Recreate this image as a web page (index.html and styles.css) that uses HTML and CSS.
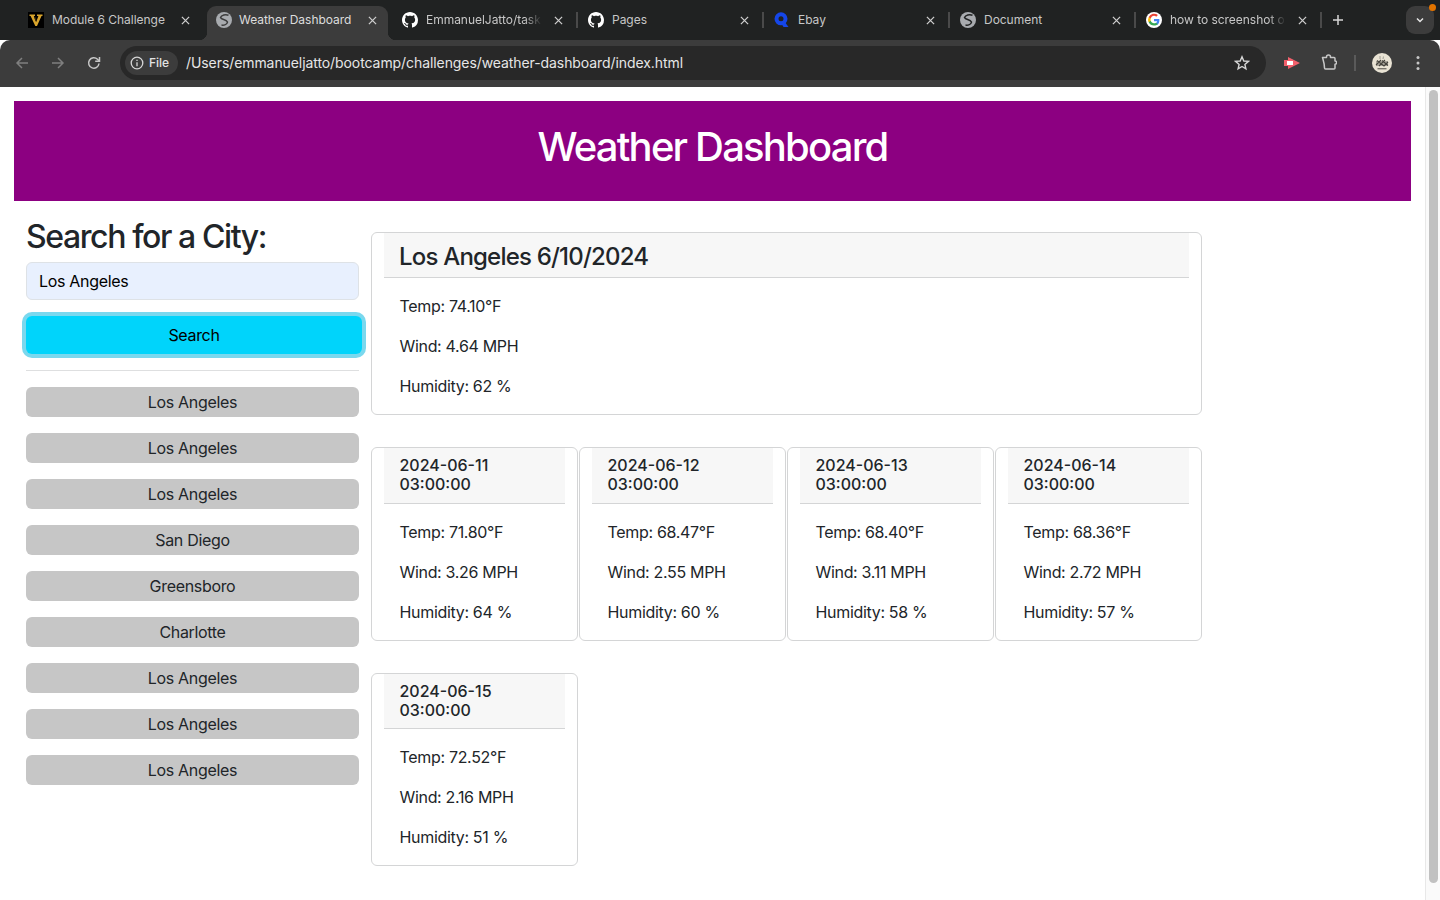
FILE: index.html
```html
<!DOCTYPE html>
<html lang="en">
<head>
<meta charset="UTF-8">
<meta name="viewport" content="width=device-width, initial-scale=1.0">
<title>Weather Dashboard</title>
<link rel="stylesheet" href="styles.css">
</head>
<body>

<!-- Browser tabs -->
<div class="tabstrip">
  <div class="tab tab-first">
    <svg class="favicon" viewBox="0 0 16 16"><rect width="16" height="16" fill="#000"/><path d="M1.5 2.500h5.500v1.600H5.800L8.200 10l2.200-5.900H9V2.500h5.500v1.600h-1L9 14H7.300L2.600 4.100H1.500z" fill="#d9a52c"/><path d="M6 5h1.400l1 3-.7 1.800z" fill="#3a2a08"/></svg>
    <span class="tab-title">Module 6 Challenge</span>
    <svg class="tab-close" viewBox="0 0 10 10"><path d="M1 1l8 8M9 1 1 9" stroke="#cfcfcf" stroke-width="1.400" fill="none"/></svg>
  </div>
  <div class="tab tab-active">
    <svg class="favicon" viewBox="0 0 16 16"><circle cx="8" cy="8" r="8" fill="#a8abaf"/><path d="M12.500 3.200C9.500 2 5.500 3 4.500 5.500c1 2.500 5.500 1.500 7 4.500-.5 2.500-3.500 3.500-6 3" stroke="#3c3c3c" stroke-width="1.500" fill="none"/></svg>
    <span class="tab-title">Weather Dashboard</span>
    <svg class="tab-close" viewBox="0 0 10 10"><path d="M1 1l8 8M9 1 1 9" stroke="#cfcfcf" stroke-width="1.400" fill="none"/></svg>
  </div>
  <div class="tab">
    <svg class="favicon" viewBox="0 0 16 16"><path fill="#fff" d="M8 0C3.580 0 0 3.580 0 8c0 3.540 2.290 6.530 5.470 7.590.4.070.55-.17.55-.38 0-.19-.010-.82-.010-1.490-2.010.37-2.530-.49-2.690-.94-.090-.23-.48-.94-.82-1.130-.28-.15-.68-.52-.010-.53.63-.010 1.080.58 1.230.82.72 1.210 1.870.87 2.330.66.070-.52.28-.87.51-1.070-1.780-.2-3.640-.89-3.640-3.950 0-.87.31-1.590.82-2.150-.080-.2-.36-1.020.080-2.120 0 0 .67-.21 2.200.82.64-.18 1.320-.27 2-.27s1.360.090 2 .27c1.530-1.040 2.200-.82 2.200-.82.44 1.100.16 1.920.080 2.120.51.56.82 1.270.82 2.150 0 3.070-1.870 3.750-3.650 3.950.29.25.54.73.54 1.480 0 1.070-.010 1.930-.010 2.200 0 .21.150.46.55.38A8.010 8.010 0 0 0 16 8c0-4.420-3.580-8-8-8z"/></svg>
    <span class="tab-title tab-fade">EmmanuelJatto/task</span>
    <svg class="tab-close" viewBox="0 0 10 10"><path d="M1 1l8 8M9 1 1 9" stroke="#cfcfcf" stroke-width="1.400" fill="none"/></svg>
    <span class="tab-sep"></span>
  </div>
  <div class="tab">
    <svg class="favicon" viewBox="0 0 16 16"><path fill="#fff" d="M8 0C3.580 0 0 3.580 0 8c0 3.540 2.290 6.530 5.470 7.590.4.070.55-.17.55-.38 0-.19-.010-.82-.010-1.490-2.010.37-2.530-.49-2.690-.94-.090-.23-.48-.94-.82-1.130-.28-.15-.68-.52-.010-.53.63-.010 1.080.58 1.230.82.72 1.210 1.870.87 2.330.66.070-.52.28-.87.51-1.070-1.780-.2-3.640-.89-3.640-3.950 0-.87.31-1.590.82-2.150-.080-.2-.36-1.020.080-2.120 0 0 .67-.21 2.200.82.64-.18 1.320-.27 2-.27s1.360.090 2 .27c1.530-1.040 2.200-.82 2.200-.82.44 1.100.16 1.920.080 2.120.51.56.82 1.270.82 2.150 0 3.070-1.870 3.750-3.650 3.950.29.25.54.73.54 1.480 0 1.070-.010 1.930-.010 2.200 0 .21.150.46.55.38A8.010 8.010 0 0 0 16 8c0-4.420-3.580-8-8-8z"/></svg>
    <span class="tab-title">Pages</span>
    <svg class="tab-close" viewBox="0 0 10 10"><path d="M1 1l8 8M9 1 1 9" stroke="#cfcfcf" stroke-width="1.400" fill="none"/></svg>
    <span class="tab-sep"></span>
  </div>
  <div class="tab">
    <svg class="favicon" viewBox="0 0 16 16"><circle cx="7" cy="6.800" r="4.500" fill="none" stroke="#1546e8" stroke-width="4"/><path d="M6.500 10 9.500 15H14.500L10.500 9.500z" fill="#1546e8"/></svg>
    <span class="tab-title">Ebay</span>
    <svg class="tab-close" viewBox="0 0 10 10"><path d="M1 1l8 8M9 1 1 9" stroke="#cfcfcf" stroke-width="1.400" fill="none"/></svg>
    <span class="tab-sep"></span>
  </div>
  <div class="tab">
    <svg class="favicon" viewBox="0 0 16 16"><circle cx="8" cy="8" r="8" fill="#a8abaf"/><path d="M12.500 3.200C9.500 2 5.500 3 4.500 5.500c1 2.500 5.500 1.500 7 4.500-.5 2.500-3.500 3.500-6 3" stroke="#202222" stroke-width="1.500" fill="none"/></svg>
    <span class="tab-title">Document</span>
    <svg class="tab-close" viewBox="0 0 10 10"><path d="M1 1l8 8M9 1 1 9" stroke="#cfcfcf" stroke-width="1.400" fill="none"/></svg>
    <span class="tab-sep"></span>
  </div>
  <div class="tab">
    <svg class="favicon" viewBox="0 0 16 16"><circle cx="8" cy="8" r="8" fill="#fff"/><path d="M13.400 8.100c0-.42-.04-.82-.11-1.200H8v2.280h3.170a2.710 2.710 0 0 1-1.180 1.780v1.480h1.900c1.120-1.020 1.510-2.530 1.510-4.340z" fill="#4285f4"/><path d="M8 13.600c1.580 0 2.920-.53 3.890-1.430l-1.900-1.480c-.53.35-1.200.56-1.990.56-1.520 0-2.820-1.030-3.290-2.420H2.750v1.520A5.880 5.880 0 0 0 8 13.600z" fill="#34a853"/><path d="M4.710 8.830a3.540 3.540 0 0 1 0-2.230V5.080H2.750a5.880 5.880 0 0 0 0 5.270z" fill="#fbbc05"/><path d="M8 3.860c.86 0 1.630.3 2.240.88l1.680-1.680A5.880 5.880 0 0 0 2.750 5.080L4.710 6.600C5.180 5.200 6.480 3.860 8 3.860z" fill="#ea4335"/></svg>
    <span class="tab-title tab-fade">how to screenshot o</span>
    <svg class="tab-close" viewBox="0 0 10 10"><path d="M1 1l8 8M9 1 1 9" stroke="#cfcfcf" stroke-width="1.400" fill="none"/></svg>
    <span class="tab-sep"></span>
  </div>
  <svg class="new-tab" viewBox="0 0 12 12"><path d="M6 1v10M1 6h10" stroke="#d6d6d6" stroke-width="1.500" fill="none"/></svg>
  <div class="tab-search">
    <svg viewBox="0 0 10 10"><path d="M2 3.500 5 6.500 8 3.500" stroke="#e6e6e6" stroke-width="1.500" fill="none"/></svg>
    <span class="tab-dot"></span>
  </div>
</div>

<!-- Address bar -->
<div class="toolbar">
  <svg class="tool tool-back" viewBox="0 0 16 16"><path d="M14 8H3M8 3 3 8l5 5" stroke="#7f7f7f" stroke-width="1.500" fill="none"/></svg>
  <svg class="tool tool-forward" viewBox="0 0 16 16"><path d="M2 8h11M8 3l5 5-5 5" stroke="#7f7f7f" stroke-width="1.500" fill="none"/></svg>
  <svg class="tool tool-reload" viewBox="0 0 16 16"><path d="M13 8.500A5.200 5.200 0 1 1 11.500 4.300L13 5.800" stroke="#c7c7c7" stroke-width="1.500" fill="none"/><path d="M13.500 2v4.300H9.200" stroke="#c7c7c7" stroke-width="1.500" fill="none"/></svg>
  <div class="omnibox">
    <div class="file-chip">
      <svg viewBox="0 0 14 14"><circle cx="7" cy="7" r="5.800" stroke="#d6d6d6" stroke-width="1.300" fill="none"/><path d="M7 6.200v4M7 3.700v1.300" stroke="#d6d6d6" stroke-width="1.300"/></svg>
      <span>File</span>
    </div>
    <span class="url">/Users/emmanueljatto/bootcamp/challenges/weather-dashboard/index.html</span>
    <svg class="star" viewBox="0 0 16 16"><path d="M8 1.800 9.800 6l4.600.4-3.500 3 1 4.500L8 11.500l-3.900 2.400 1-4.500-3.500-3L6.200 6z" stroke="#d6d6d6" stroke-width="1.400" fill="none"/></svg>
  </div>
  <svg class="ext-red" viewBox="0 0 16 12"><path d="M0 3h4V0l12 6-12 6V9H0z" fill="#f2606c"/><path d="M3 4h6v4H3z" fill="#fff"/></svg>
  <svg class="ext-puzzle" viewBox="0 0 16 16"><path d="M1.500 3.500H5.500V3a2 2 0 0 1 4 0v.5H13a1 1 0 0 1 1 1V7a1.600 1.600 0 0 1 0 3.200V14a1 1 0 0 1-1 1H4.500a1 1 0 0 1-1-1C3.500 10 2.500 7 1.500 3.500z" stroke="#c7c7c7" stroke-width="1.500" fill="none" stroke-linejoin="round"/></svg>
  <span class="tool-sep"></span>
  <svg class="avatar" viewBox="0 0 20 20"><circle cx="10" cy="10" r="10" fill="#e9e3d4"/><path d="M4 8h12v5H4z" fill="#a9a59a"/><path d="M4 12l5-5M7 13l6-6M12 13l4-4M5 7.500l7 5.500M10 7.500l6 5" stroke="#45433d" stroke-width="1.100"/><path d="M8 3v3M11.500 3.500 11 6" stroke="#a6a398" stroke-width="1.100"/><path d="M5.500 15h9v1.400h-9z" fill="#7a776e"/></svg>
  <svg class="menu-dots" viewBox="0 0 4 16"><circle cx="2" cy="2.500" r="1.500" fill="#c7c7c7"/><circle cx="2" cy="8" r="1.500" fill="#c7c7c7"/><circle cx="2" cy="13.500" r="1.500" fill="#c7c7c7"/></svg>
</div>

<div class="viewport">
  <div class="page">
    <header class="site-header">
      <h1>Weather Dashboard</h1>
    </header>

    <div class="content">
      <aside class="sidebar">
        <h2>Search for a City:</h2>
        <div class="city-input">Los Angeles</div>
        <button class="search-btn">Search</button>
        <hr class="divider">
        <div class="history">
          <button class="history-btn">Los Angeles</button>
          <button class="history-btn">Los Angeles</button>
          <button class="history-btn">Los Angeles</button>
          <button class="history-btn">San Diego</button>
          <button class="history-btn">Greensboro</button>
          <button class="history-btn">Charlotte</button>
          <button class="history-btn">Los Angeles</button>
          <button class="history-btn">Los Angeles</button>
          <button class="history-btn">Los Angeles</button>
        </div>
      </aside>

      <main class="results">
        <section class="card">
          <h3 class="card-header today-title">Los Angeles 6/10/2024</h3>
          <div class="card-body">
            <p>Temp: 74.10°F</p>
            <p>Wind: 4.64 MPH</p>
            <p>Humidity: 62 %</p>
          </div>
        </section>

        <div class="forecast">
          <section class="card">
            <h5 class="card-header">2024-06-11 03:00:00</h5>
            <div class="card-body">
              <p>Temp: 71.80°F</p>
              <p>Wind: 3.26 MPH</p>
              <p>Humidity: 64 %</p>
            </div>
          </section>
          <section class="card">
            <h5 class="card-header">2024-06-12 03:00:00</h5>
            <div class="card-body">
              <p>Temp: 68.47°F</p>
              <p>Wind: 2.55 MPH</p>
              <p>Humidity: 60 %</p>
            </div>
          </section>
          <section class="card">
            <h5 class="card-header">2024-06-13 03:00:00</h5>
            <div class="card-body">
              <p>Temp: 68.40°F</p>
              <p>Wind: 3.11 MPH</p>
              <p>Humidity: 58 %</p>
            </div>
          </section>
          <section class="card">
            <h5 class="card-header">2024-06-14 03:00:00</h5>
            <div class="card-body">
              <p>Temp: 68.36°F</p>
              <p>Wind: 2.72 MPH</p>
              <p>Humidity: 57 %</p>
            </div>
          </section>
          <section class="card">
            <h5 class="card-header">2024-06-15 03:00:00</h5>
            <div class="card-body">
              <p>Temp: 72.52°F</p>
              <p>Wind: 2.16 MPH</p>
              <p>Humidity: 51 %</p>
            </div>
          </section>
        </div>
      </main>
    </div>
  </div>

  <div class="scrollbar"><div class="scroll-thumb"></div></div>
</div>

</body>
</html>
```

FILE: styles.css
```css
/* Global Styles */
html, body {
  margin: 0;
  padding: 0;
  height: 900px;
  overflow: hidden;
}

body {
  font-family: 'Inter', 'Liberation Sans', sans-serif;
  font-size: 16px;
  line-height: 24px;
  letter-spacing: -0.32px;
  color: #212529;
  background-color: #fff;
}

/* Browser tabs */
.tabstrip {
  height: 40px;
  padding-left: 21px;
  display: flex;
  align-items: center;
  background-color: #202222;
  letter-spacing: 0;
}

.tab {
  width: 186px;
  height: 34px;
  margin-top: 6px;
  padding: 0 0 6px 9px;
  flex: none;
  display: flex;
  align-items: center;
  box-sizing: border-box;
  position: relative;
  color: #c7c7c7;
  font-size: 12px;
}

.tab-first .favicon {
  margin-left: -2px;
}

.tab-first .tab-title {
  width: 127px;
}

.tab-active {
  width: 181px;
  margin-right: 5px;
  background-color: #3c3c3c;
  border-radius: 9px 9px 0 0;
  color: #dcdcdc;
}

.tab-active::before,
.tab-active::after {
  content: "";
  position: absolute;
  bottom: 0;
  width: 8px;
  height: 8px;
}

.tab-active::before {
  left: -8px;
  background: radial-gradient(circle at 0 0, transparent 8px, #3c3c3c 8.5px);
}

.tab-active::after {
  right: -8px;
  background: radial-gradient(circle at 100% 0, transparent 8px, #3c3c3c 8.5px);
}

.favicon {
  width: 16px;
  height: 16px;
  flex: none;
  margin-right: 8px;
}

.tab-title {
  width: 126px;
  flex: none;
  white-space: nowrap;
  letter-spacing: -0.03px;
}

.tab-active .tab-title {
  width: 127px;
  margin-left: -1px;
}

.tab-fade {
  -webkit-mask-image: linear-gradient(to right, #000 78%, transparent 92%);
  mask-image: linear-gradient(to right, #000 78%, transparent 92%);
}

.tab-close {
  width: 9px;
  height: 9px;
  margin: 0 1.5px;
  flex: none;
}

.tab-sep {
  width: 2px;
  height: 16px;
  margin-left: 12px;
  flex: none;
  background-color: #4a4a4a;
}

.new-tab {
  width: 12px;
  height: 12px;
  margin-left: 9px;
  flex: none;
}

.tab-search {
  width: 28px;
  height: 28px;
  margin-left: 62px;
  flex: none;
  border-radius: 9px;
  background-color: #3c3c3c;
  display: flex;
  align-items: center;
  justify-content: center;
  position: relative;
}

.tab-search svg {
  width: 10px;
  height: 10px;
}

.tab-dot {
  position: absolute;
  top: -2.5px;
  right: -1.5px;
  width: 7px;
  height: 7px;
  border-radius: 50%;
  background-color: #e37400;
}

/* Address bar */
.toolbar {
  height: 47px;
  padding: 0 0 1px 14px;
  box-sizing: border-box;
  display: flex;
  align-items: center;
  background-color: #3c3c3c;
  border-radius: 10px 10px 0 0;
  letter-spacing: 0;
}

.tool {
  width: 16px;
  height: 16px;
  flex: none;
  margin-right: 20px;
}

.omnibox {
  width: 1146px;
  height: 34px;
  margin-left: -2px;
  padding: 0 16px 0 5px;
  box-sizing: border-box;
  flex: none;
  display: flex;
  align-items: center;
  background-color: #282828;
  border-radius: 17px;
}

.file-chip {
  width: 53px;
  height: 24px;
  padding-left: 5px;
  box-sizing: border-box;
  flex: none;
  display: flex;
  align-items: center;
  gap: 5px;
  border-radius: 12px;
  background-color: #3c3c3c;
  color: #e3e3e3;
  font-size: 12px;
  font-weight: 500;
}

.file-chip svg {
  width: 14px;
  height: 14px;
}

.url {
  margin-left: 8px;
  flex: 1;
  color: #e6e6e6;
  font-size: 14px;
  letter-spacing: -0.08px;
  white-space: nowrap;
}

.star {
  width: 16px;
  height: 16px;
  flex: none;
}

.ext-red {
  width: 16px;
  height: 12px;
  margin-left: 18px;
  flex: none;
}

.ext-puzzle {
  width: 16px;
  height: 16px;
  margin-left: 21px;
  margin-bottom: 2px;
  flex: none;
}

.tool-sep {
  width: 2px;
  height: 16px;
  margin-left: 17px;
  flex: none;
  background-color: #5a5a5a;
}

.avatar {
  width: 20px;
  height: 20px;
  margin-left: 16px;
  flex: none;
}

.menu-dots {
  width: 4px;
  height: 16px;
  margin-left: 24px;
  flex: none;
}

/* Page area */
.viewport {
  height: 813px;
  display: flex;
}

.page {
  flex: 1;
  padding-top: 14px;
  background-color: #fff;
}

.site-header {
  height: 100px;
  margin: 0 14px;
  display: flex;
  justify-content: center;
  background-color: #8c0081;
}

h1 {
  margin: 22px 0 0;
  color: #fff;
  font-size: 40px;
  line-height: 48px;
  font-weight: 500;
  letter-spacing: -1.8px;
}

.content {
  display: flex;
  padding-left: 14px;
}

.sidebar {
  width: 357px;
  padding: 17px 12px 0;
  box-sizing: border-box;
  flex: none;
}

h2 {
  margin: 0 0 6px;
  font-size: 32px;
  line-height: 38.4px;
  font-weight: 500;
  letter-spacing: -1.4px;
}

.city-input {
  height: 38px;
  padding: 6px 12px;
  box-sizing: border-box;
  border: 1px solid #dee2e6;
  border-radius: 6px;
  background-color: #e8f0fe;
  color: #000;
}

.search-btn {
  display: block;
  width: 336px;
  height: 38px;
  margin-top: 16px;
  border: 0;
  border-radius: 6px;
  background-color: #00d4fb;
  box-shadow: 0 0 0 4px #7ad8ee;
  color: #000;
  font: inherit;
  letter-spacing: inherit;
}

.divider {
  height: 1px;
  margin: 16px 0;
  border: 0;
  background-color: #dedfe0;
}

.history {
  display: flex;
  flex-direction: column;
  gap: 16px;
}

.history-btn {
  height: 30px;
  padding: 0;
  border: 0;
  border-radius: 6px;
  background-color: #c6c6c6;
  color: #212529;
  font: inherit;
  letter-spacing: inherit;
}

.results {
  width: 831px;
  padding-top: 31px;
  flex: none;
}

.card {
  border: 1px solid #d4d5d6;
  border-radius: 6px;
  background-color: #fff;
}

.card-header {
  margin: 0 12px;
  padding: 8px 15.5px 9px;
  background-color: #f7f7f7;
  border-bottom: 1px solid #d4d5d6;
  font-size: 16px;
  line-height: 19.2px;
  font-weight: 500;
  letter-spacing: 0;
}

.today-title {
  padding: 9.5px 15px 5.5px;
  font-size: 24px;
  line-height: 28.8px;
  letter-spacing: -0.8px;
}

.card-body {
  padding: 16px 27.5px;
}

.card-body p {
  margin: 0 0 16px;
}

.card-body p:last-child {
  margin-bottom: 0;
}

.forecast {
  display: grid;
  grid-template-columns: repeat(4, 208px);
  row-gap: 31.6px;
  margin-top: 32px;
}

.forecast .card {
  width: 207px;
  box-sizing: border-box;
}

.forecast .card:nth-child(5) .card-header {
  padding-bottom: 8px;
}

/* Scrollbar */
.scrollbar {
  width: 15px;
  box-sizing: border-box;
  flex: none;
  padding: 3px 2px 0 3px;
  background-color: #fafafa;
  border-left: 1px solid #e8e8e8;
}

.scroll-thumb {
  height: 793px;
  border-radius: 5px;
  background-color: #c1c1c1;
}
```
